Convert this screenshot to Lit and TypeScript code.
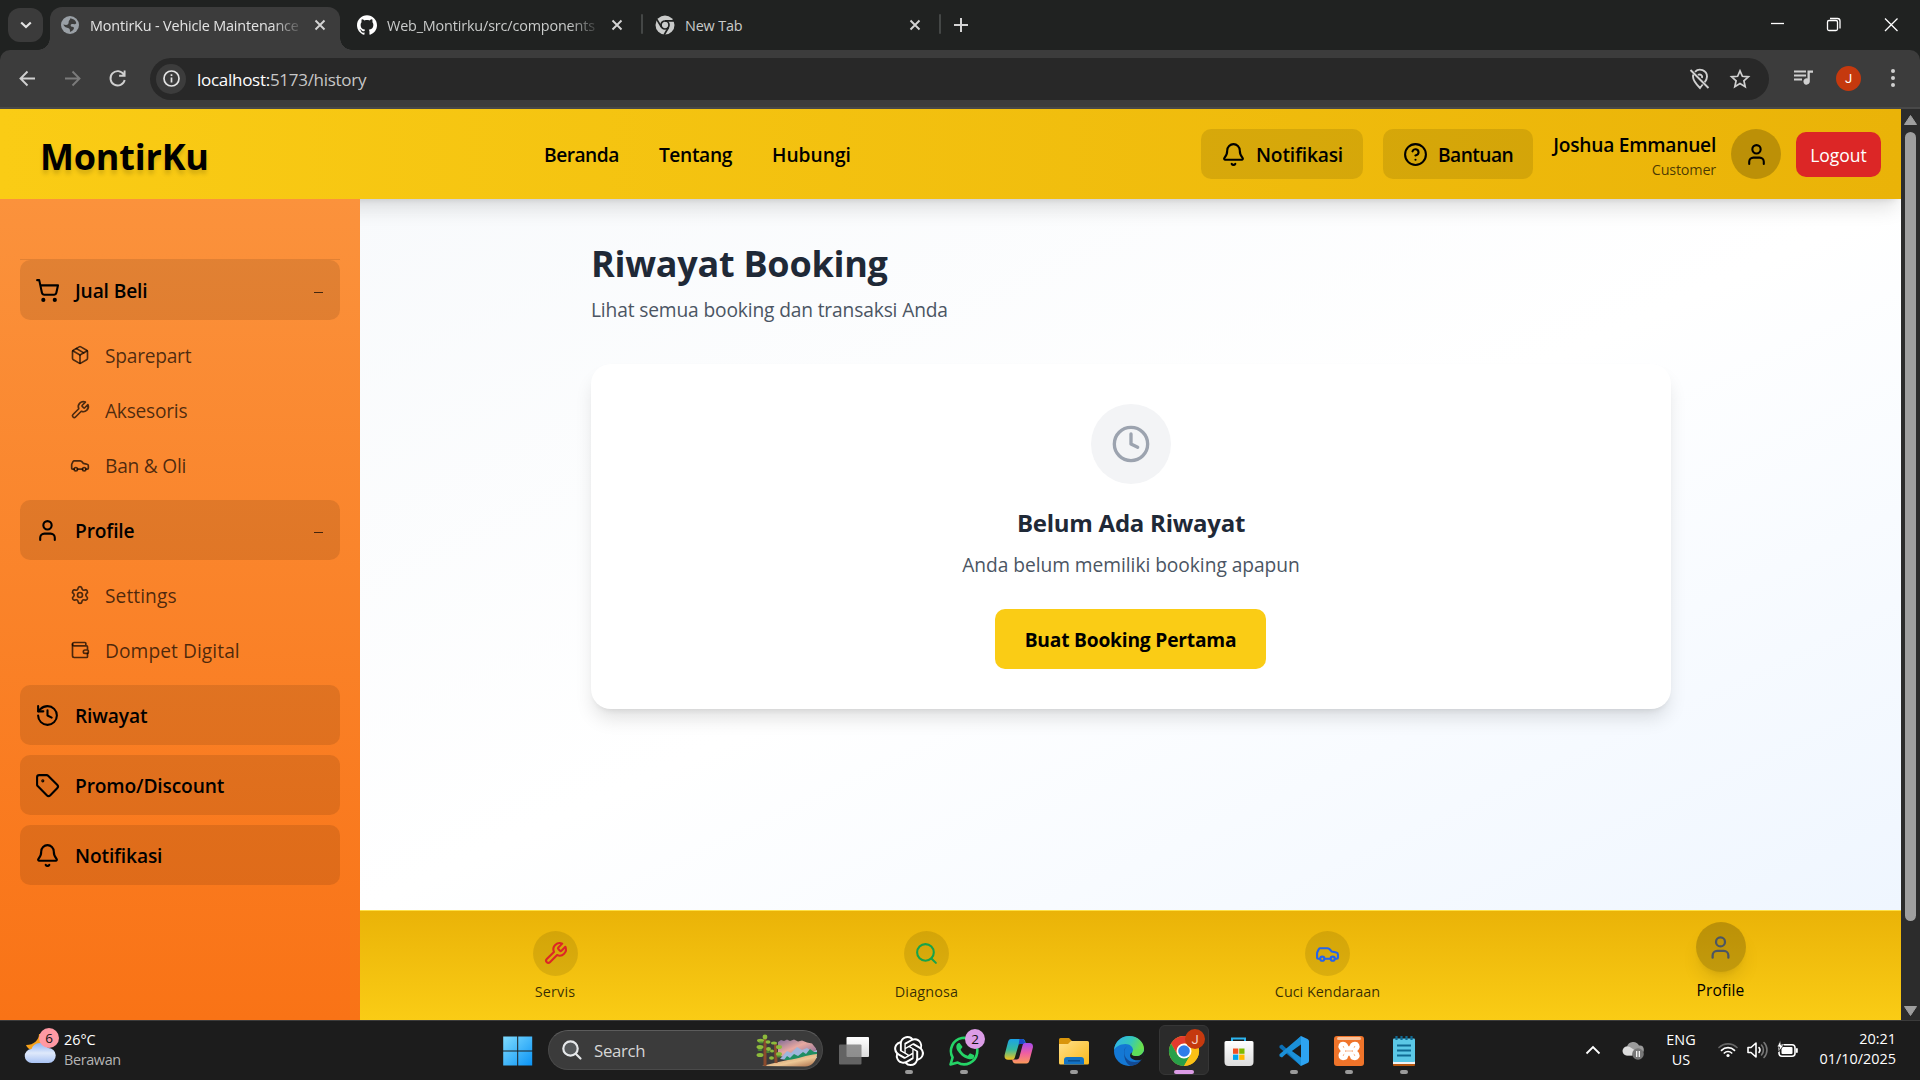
import { LitElement, html, css, svg } from "lit";
import { customElement } from "lit/decorators.js";

const stroke = (body: unknown) => html`<svg class="ico" viewBox="0 0 24 24" fill="none" stroke="currentColor" stroke-width="2" stroke-linecap="round" stroke-linejoin="round">${body}</svg>`;

const I: Record<string, unknown> = {
  bell: svg`<path d="M10.268 21a2 2 0 0 0 3.464 0"/><path d="M3.262 15.326A1 1 0 0 0 4 17h16a1 1 0 0 0 .74-1.673C19.41 13.956 18 12.499 18 8A6 6 0 0 0 6 8c0 4.499-1.411 5.956-2.738 7.326"/>`,
  help: svg`<circle cx="12" cy="12" r="10"/><path d="M9.09 9a3 3 0 0 1 5.83 1c0 2-3 3-3 3"/><path d="M12 17h.01"/>`,
  user: svg`<path d="M19 21v-2a4 4 0 0 0-4-4H9a4 4 0 0 0-4 4v2"/><circle cx="12" cy="7" r="4"/>`,
  cart: svg`<circle cx="8" cy="21" r="1"/><circle cx="19" cy="21" r="1"/><path d="M2.05 2.05h2l2.66 12.42a2 2 0 0 0 2 1.58h9.78a2 2 0 0 0 1.95-1.57l1.65-7.43H5.12"/>`,
  box: svg`<path d="M11 21.73a2 2 0 0 0 2 0l7-4A2 2 0 0 0 21 16V8a2 2 0 0 0-1-1.73l-7-4a2 2 0 0 0-2 0l-7 4A2 2 0 0 0 3 8v8a2 2 0 0 0 1 1.73z"/><path d="M12 22V12"/><path d="M3.29 7 12 12l8.71-5"/><path d="m7.5 4.27 9 5.15"/>`,
  wrench: svg`<path d="M14.7 6.3a1 1 0 0 0 0 1.4l1.6 1.6a1 1 0 0 0 1.4 0l3.77-3.77a6 6 0 0 1-7.94 7.94l-6.91 6.91a2.12 2.12 0 0 1-3-3l6.91-6.91a6 6 0 0 1 7.94-7.94l-3.76 3.76z"/>`,
  car: svg`<path d="M19 17h2c.6 0 1-.4 1-1v-3c0-.9-.7-1.7-1.5-1.9C18.7 10.6 16 10 16 10s-1.3-1.4-2.2-2.3c-.5-.4-1.1-.7-1.8-.7H5c-.6 0-1.1.4-1.4.9l-1.4 2.9A3.7 3.7 0 0 0 2 12v4c0 .6.4 1 1 1h2"/><circle cx="7" cy="17" r="2"/><path d="M9 17h6"/><circle cx="17" cy="17" r="2"/>`,
  gear: svg`<path d="M9.671 4.136a2.34 2.34 0 0 1 4.659 0 2.34 2.34 0 0 0 3.319 1.915 2.34 2.34 0 0 1 2.33 4.033 2.34 2.34 0 0 0 0 3.831 2.34 2.34 0 0 1-2.33 4.033 2.34 2.34 0 0 0-3.319 1.915 2.34 2.34 0 0 1-4.659 0 2.34 2.34 0 0 0-3.32-1.915 2.34 2.34 0 0 1-2.33-4.033 2.34 2.34 0 0 0 0-3.831A2.34 2.34 0 0 1 6.35 6.051a2.34 2.34 0 0 0 3.319-1.915"/><circle cx="12" cy="12" r="3"/>`,
  wallet: svg`<path d="M19 7V4a1 1 0 0 0-1-1H5a2 2 0 0 0 0 4h15a1 1 0 0 1 1 1v4h-3a2 2 0 0 0 0 4h3a1 1 0 0 0 1-1v-2a1 1 0 0 0-1-1"/><path d="M3 5v14a2 2 0 0 0 2 2h15a1 1 0 0 0 1-1v-4"/>`,
  history: svg`<path d="M3 12a9 9 0 1 0 9-9 9.75 9.75 0 0 0-6.74 2.74L3 8"/><path d="M3 3v5h5"/><path d="M12 7v5l4 2"/>`,
  tag: svg`<path d="M12.586 2.586A2 2 0 0 0 11.172 2H4a2 2 0 0 0-2 2v7.172a2 2 0 0 0 .586 1.414l8.704 8.704a2.426 2.426 0 0 0 3.42 0l6.58-6.58a2.426 2.426 0 0 0 0-3.42z"/><circle cx="7.5" cy="7.5" r=".5" fill="currentColor"/>`,
  search: svg`<circle cx="11" cy="11" r="8"/><path d="m21 21-4.3-4.3"/>`,
  clock: svg`<circle cx="12" cy="12" r="10"/><path d="M12 6v6l4 2"/>`,
};

const FONT = css`"Segoe UI", "Open Sans", "Noto Sans", sans-serif`;

const shared = css`
  *, *::before, *::after { box-sizing: border-box; }
  svg { display: block; flex: none; overflow: visible; }
`;

@customElement("browser-chrome")
class BrowserChrome extends LitElement {
  static styles = [shared, css`
    :host { display: flex; flex-direction: column; height: 109px; background: #202221; color: #e3e3e3; font: 14.4px/20px ${FONT}; }
    .strip { display: flex; height: 50px; align-items: flex-start; }
    .tabsearch { width: 35px; height: 34px; margin: 8px 7px 0 8px; border-radius: 12px; background: #3b3b3b; display: grid; place-items: center; }
    .tab { display: flex; align-items: center; height: 36px; margin-top: 7px; padding: 0 12px 0 10px; }
    .tab svg.fav { width: 20px; height: 20px; }
    .title { margin-left: 10px; width: 210px; white-space: nowrap; overflow: hidden; letter-spacing: -0.16px; color: #c9cbca; padding-top: 1px; }
    .fade { -webkit-mask-image: linear-gradient(90deg, #000 182px, transparent 214px); mask-image: linear-gradient(90deg, #000 182px, transparent 214px); }
    .x { width: 10px; height: 10px; margin-left: 15px; }
    .active { position: relative; width: 290px; height: 43px; padding-bottom: 7px; background: #3c3c3c; border-radius: 12px 12px 0 0; }
    .active::before, .active::after { content: ""; position: absolute; bottom: 0; width: 12px; height: 12px; }
    .active::before { left: -12px; background: radial-gradient(circle at 0 0, transparent 11.5px, #3c3c3c 12px); }
    .active::after { right: -12px; background: radial-gradient(circle at 100% 0, transparent 11.5px, #3c3c3c 12px); }
    .active .title { color: #e4e4e4; }
    .second { width: 301px; padding-left: 17px; }
    .third { width: 296px; padding-left: 12px; }
    .sep { width: 2px; height: 20px; margin-top: 14px; background: #444746; border-radius: 1px; }
    .plus { width: 14px; height: 14px; margin: 18px 0 0 13px; }
    .win { display: flex; margin-left: auto; }
    .win svg { width: 57px; height: 50px; }
    .bar { display: flex; align-items: center; height: 59px; background: #3c3c3c; border-radius: 10px 10px 0 0; border-bottom: 2px solid #494949; }
    .bar > svg { width: 45px; height: 45px; }
    .bar > .first { margin-left: 5px; }
    .omni { display: flex; align-items: center; width: 1619px; height: 42px; margin-left: 10px; border-radius: 21px; background: #282828; padding: 0 18px 0 6px; }
    .info { width: 30px; height: 30px; border-radius: 50%; background: #3c3c3c; display: grid; place-items: center; }
    .url { margin-left: 11px; font-size: 17px; letter-spacing: -0.28px; color: #c7c7c7; margin-right: auto; padding-top: 2px; }
    .url b { font-weight: 400; color: #fff; }
    .omni > svg { width: 22px; height: 22px; margin-left: 18px; }
    .me { width: 25px; height: 25px; margin: 0 20px 0 11px; border-radius: 50%; background: #c5390e; color: #fff; display: grid; place-items: center; font: 13px/1 Roboto, sans-serif; }
    .media { margin-left: 11px; }
    .bar > .dots { width: 24px; }
  `];
  render() {
    const x = html`<svg class="x" viewBox="0 0 10 10" stroke="#d4d4d4" stroke-width="1.9" fill="none"><path d="M.5.5l9 9M9.500.5l-9 9"/></svg>`;
    return html`
      <div class="strip">
        <div class="tabsearch"><svg width="12" height="8" viewBox="0 0 12 8" fill="none" stroke="#e3e3e3" stroke-width="2.2"><path d="M1.200 1.500 6 6l4.800-4.500"/></svg></div>
        <div class="tab active">
          <svg class="fav" viewBox="0 0 20 20"><circle cx="10" cy="10" r="9" fill="#9aa0a6"/><path d="M10 3.500c2.600.1 5.800 1.300 6.300 4.800-1.500 2-3.400.4-4.900.9-1.500.6-.5 2.600.8 2.600 1.800 0 2.200 1.300 1.400 2.500-.9 1.300-2.400 2.300-3.600 2.600 0-2-.1-3-1.400-3.600-1.600-.8-4.600-1.300-5.300-3.900 1.400.4 3.600 1 4.700-.2 1.200-1.300.2-2.700 1.200-3.700.6-.7 1-1 .8-2z" fill="#3c3c3c"/></svg>
          <div class="title fade">MontirKu - Vehicle Maintenance</div>${x}
        </div>
        <div class="tab second">
          <svg class="fav" viewBox="0 0 24 24" fill="#fff"><path d="M12 .297c-6.630 0-12 5.373-12 12 0 5.303 3.438 9.800 8.205 11.385.6.113.82-.258.82-.577 0-.285-.010-1.040-.015-2.040-3.338.724-4.042-1.610-4.042-1.610C4.422 18.070 3.633 17.700 3.633 17.700c-1.087-.744.084-.729.084-.729 1.205.084 1.838 1.236 1.838 1.236 1.070 1.835 2.809 1.305 3.495.998.108-.776.417-1.305.76-1.605-2.665-.3-5.466-1.332-5.466-5.930 0-1.310.465-2.380 1.235-3.220-.135-.303-.54-1.523.105-3.176 0 0 1.005-.322 3.300 1.230.96-.267 1.980-.399 3-.405 1.020.006 2.040.138 3 .405 2.280-1.552 3.285-1.230 3.285-1.230.645 1.653.24 2.873.12 3.176.765.84 1.230 1.910 1.230 3.220 0 4.610-2.805 5.625-5.475 5.920.42.36.81 1.096.81 2.220 0 1.606-.015 2.896-.015 3.286 0 .315.21.69.825.57C20.565 22.092 24 17.592 24 12.297c0-6.627-5.373-12-12-12"/></svg>
          <div class="title fade">Web_Montirku/src/components</div>${x}
        </div>
        <div class="sep"></div>
        <div class="tab third">
          <svg class="fav" viewBox="0 0 20 20"><circle cx="10" cy="10" r="9.500" fill="#c9cbca"/><circle cx="10" cy="10" r="4" fill="none" stroke="#202221" stroke-width="1.700"/><path d="M10 5.800h9M6.400 12 1.800 4.400M13.600 12.200 9.200 19.800" stroke="#202221" stroke-width="1.700"/></svg>
          <div class="title">New Tab</div>${x}
        </div>
        <div class="sep"></div>
        <svg class="plus" viewBox="0 0 14 14" stroke="#d4d4d4" stroke-width="2"><path d="M7 0v14M0 7h14"/></svg>
        <div class="win">
          <svg viewBox="0 0 57 50" stroke="#fff" stroke-width="1.300"><path d="M22 23.500h13"/></svg>
          <svg viewBox="0 0 57 50" stroke="#fff" stroke-width="1.300" fill="none"><rect x="21.500" y="20.500" width="10" height="10" rx="1.500"/><path d="M24 18.500h7.500a2.500 2.500 0 0 1 2.500 2.500v7.500"/></svg>
          <svg viewBox="0 0 57 50" stroke="#fff" stroke-width="1.300"><path d="m22 18.500 12.500 12.500M34.500 18.500 22 31"/></svg>
        </div>
      </div>
      <div class="bar">
        <svg class="first" viewBox="0 0 45 45" stroke="#d0d0d0" stroke-width="1.900" fill="none"><path d="M30 22.500H16M22.500 15.500l-7 7 7 7"/></svg>
        <svg viewBox="0 0 45 45" stroke="#7b7b7b" stroke-width="1.900" fill="none"><path d="M15 22.500h14M22.500 15.500l7 7-7 7"/></svg>
        <svg viewBox="0 0 45 45" stroke="#d0d0d0" stroke-width="1.900" fill="none"><path d="M28.800 18.500a7.200 7.200 0 1 0 .9 5.500M29.600 14.500v5.200h-5.500"/></svg>
        <div class="omni">
          <div class="info"><svg width="17" height="17" viewBox="0 0 17 17" fill="none" stroke="#e3e3e3" stroke-width="1.700"><circle cx="8.500" cy="8.500" r="7.500"/><path d="M8.500 7.500v5M8.500 4.300v1.800"/></svg></div>
          <div class="url"><b>localhost:</b>5173/history</div>
          <svg viewBox="0 0 22 22" fill="none" stroke="#d0d0d0" stroke-width="1.900"><path d="M6 3.800A7 7 0 0 1 18 8.500c0 2-1 4-2.300 5.800M13.700 16.500C12.500 18 11 20 11 20S4 13 4 8.500c0-.7.100-1.300.3-1.900M1.500 2l18 18M9 7a2.600 2.600 0 0 1 4 3"/></svg>
          <svg viewBox="0 0 22 22" fill="none" stroke="#d0d0d0" stroke-width="1.700"><path d="m11 2.800 2.400 5.500 6 .5-4.500 4 1.300 5.900-5.200-3.100-5.200 3.100 1.300-5.900-4.500-4 6-.5z"/></svg>
        </div>
        <svg class="media" viewBox="0 0 45 45" fill="#d0d0d0"><path d="M14 14.500h12v2H14zM14 18.500h12v2H14zM14 22.500h8v2h-8zM27.500 14.500H33v2.300h-3.200v8.700a3.200 3.200 0 1 1-2.300-3.100z"/></svg>
        <div class="me">J</div>
        <svg class="dots" viewBox="0 0 24 45" fill="#d0d0d0"><circle cx="12" cy="15" r="2"/><circle cx="12" cy="22" r="2"/><circle cx="12" cy="29" r="2"/></svg>
      </div>`;
  }
}

@customElement("site-header")
class SiteHeader extends LitElement {
  static styles = [shared, css`
    :host { display: flex; align-items: center; height: 90px; padding: 0 20px 0 41px; color: #000; font: 19.2px/30px ${FONT};
      background: linear-gradient(90deg, #facc15, #eab308); position: relative; z-index: 2;
      box-shadow: 0 12.5px 18.75px -3.75px rgba(0,0,0,.12), 0 5px 7.5px -5px rgba(0,0,0,.12); }
    .logo { width: 504px; font-size: 36px; font-weight: 700; letter-spacing: -.2px; text-shadow: 0 4px 4px rgba(0,0,0,.15); padding-top: 5px; margin-left: -1px; }
    nav { display: flex; gap: 40px; font-weight: 600; margin-right: auto; padding-top: 2px; }
    .n0 { letter-spacing: -.5px; } .n1 { letter-spacing: -.36px; } .n2 { letter-spacing: 0; }
    .pill { display: flex; align-items: center; height: 50px; padding: 0 0 0 20px; border-radius: 10px; background: rgba(0,0,0,.1); font-weight: 600; margin-right: 20px; }
    .notif { width: 162px; letter-spacing: -.18px; }
    .bantuan { width: 150px; letter-spacing: -.56px; }
    .ico { width: 25px; height: 25px; margin-right: 10px; }
    .pill span { padding-top: 2px; }
    .who { text-align: right; padding-top: 2px; width: 163px; }
    .name { font-weight: 600; line-height: 30px; letter-spacing: -.25px; }
    .role { font-size: 14.4px; line-height: 20px; color: rgba(0,0,0,.7); letter-spacing: -.2px; }
    .avatar { width: 50px; height: 50px; margin: 0 15px; border-radius: 50%; background: rgba(0,0,0,.2); display: grid; place-items: center; }
    .avatar .ico { margin: 0; }
    .logout { height: 45px; width: 85px; border-radius: 10px; background: #dc2626; color: #fff; display: grid; place-items: center; font-size: 17.500px; padding-top: 2px; }
  `];
  render() {
    return html`
      <div class="logo">MontirKu</div>
      <nav>${["Beranda", "Tentang", "Hubungi"].map((l, i) => html`<span class="n${i}">${l}</span>`)}</nav>
      <div class="pill notif">${stroke(I.bell)}<span>Notifikasi</span></div>
      <div class="pill bantuan">${stroke(I.help)}<span>Bantuan</span></div>
      <div class="who"><div class="name">Joshua Emmanuel</div><div class="role">Customer</div></div>
      <div class="avatar">${stroke(I.user)}</div>
      <div class="logout">Logout</div>`;
  }
}

const MENU = [
  { label: "Jual Beli", icon: "cart", cls: "", items: [["Sparepart", "box"], ["Aksesoris", "wrench"], ["Ban & Oli", "car"]] },
  { label: "Profile", icon: "user", cls: "wide", items: [["Settings", "gear"], ["Dompet Digital", "wallet"]] },
  { label: "Riwayat", icon: "history", cls: "", items: [] },
  { label: "Promo/Discount", icon: "tag", cls: "", items: [] },
  { label: "Notifikasi", icon: "bell", cls: "", items: [] },
];

@customElement("side-menu")
class SideMenu extends LitElement {
  static styles = [shared, css`
    :host { display: flex; flex-direction: column; width: 360px; padding: 60px 20px 0; position: relative; z-index: 3;
      background: linear-gradient(180deg, #fb923c, #f97316); color: #000; font: 19.2px/30px ${FONT}; }
    .list { display: flex; flex-direction: column; gap: 10px; border-top: 1px solid rgba(0,0,0,.1); }
    .head { display: flex; align-items: center; height: 60px; padding: 0 17px 0 15px; border-radius: 10px; background: rgba(0,0,0,.1); font-weight: 600; letter-spacing: -.15px; }
    .head .ico { width: 25px; height: 25px; margin-right: 15px; }
    .head span { padding-top: 2px; }
    .dash { margin-left: auto; width: 9px; height: 1.500px; background: rgba(0,0,0,.7); margin-top: 5px; }
    .sub { display: flex; flex-direction: column; gap: 5px; margin-top: 10px; padding-left: 50px; color: rgba(0,0,0,.7); letter-spacing: -.26px; }
    .wide { letter-spacing: .06px; }
    .row { display: flex; align-items: center; height: 50px; }
    .row .ico { width: 20px; height: 20px; margin-right: 15px; }
    .row span { padding-top: 2px; }
  `];
  render() {
    return html`<div class="list">${MENU.map(g => html`<div>
      <div class="head">${stroke(I[g.icon])}<span>${g.label}</span>${g.items.length ? html`<i class="dash"></i>` : ""}</div>
      ${g.items.length ? html`<div class="sub ${g.cls}">${g.items.map(([l, i]) => html`<div class="row">${stroke(I[i])}<span>${l}</span></div>`)}</div>` : ""}
    </div>`)}</div>`;
  }
}

@customElement("history-page")
class HistoryPage extends LitElement {
  static styles = [shared, css`
    :host { display: block; flex: 1; padding: 40px 230px 0 231px; background: linear-gradient(to bottom right, #f8fafc 0%, #fff 50%, #eff6ff 100%); color: #1f2937; font: 19.2px/30px ${FONT}; }
    h1 { margin: 0; font-size: 36px; line-height: 50px; font-weight: 700; letter-spacing: -.26px; }
    p { margin: 0; color: #4b5563; letter-spacing: -.15px; }
    .lead { margin-top: 6px; }
    .card { margin-top: 39px; height: 345px; border-radius: 20px; background: #fff; display: flex; flex-direction: column; align-items: center; padding-top: 40px;
      box-shadow: 0 12.5px 18.75px -3.75px rgba(0,0,0,.12), 0 5px 7.5px -5px rgba(0,0,0,.12); }
    .disc { width: 80px; height: 80px; border-radius: 50%; background: #f3f4f6; color: #9ca3af; display: grid; place-items: center; }
    .disc .ico { width: 40px; height: 40px; }
    h2 { margin: 21px 0 0; font-size: 24px; line-height: 35px; font-weight: 700; letter-spacing: -.25px; }
    .card p { margin-top: 10px; letter-spacing: -.05px; }
    .cta { margin: 29px 1px 0 0; width: 271px; height: 60px; border-radius: 10px; background: #facc15; color: #000; font-weight: 700; letter-spacing: -.2px; display: grid; place-items: center; padding-top: 2px; }
  `];
  render() {
    return html`
      <h1>Riwayat Booking</h1>
      <p class="lead">Lihat semua booking dan transaksi Anda</p>
      <div class="card">
        <div class="disc">${stroke(I.clock)}</div>
        <h2>Belum Ada Riwayat</h2>
        <p>Anda belum memiliki booking apapun</p>
        <div class="cta">Buat Booking Pertama</div>
      </div>`;
  }
}

@customElement("bottom-nav")
class BottomNav extends LitElement {
  static styles = [shared, css`
    :host { display: flex; height: 110px; border-top: 1px solid #fde047; background: linear-gradient(180deg, #eab308, #facc15); font: 14.4px/20px ${FONT}; position: relative; z-index: 1; }
    .it { display: flex; flex-direction: column; align-items: center; padding-top: 20px; color: rgba(0,0,0,.78); letter-spacing: .15px; }
    .a { width: 390px; } .b { width: 353px; } .c { width: 449px; letter-spacing: 0; } .d { width: 337px; }
    .disc { width: 45px; height: 45px; border-radius: 50%; background: rgba(0,0,0,.1); display: grid; place-items: center; margin-bottom: 6px; }
    .ico { width: 25px; height: 25px; }
    .a .ico { color: #dc2626; } .b .ico { color: #16a34a; } .c .ico { color: #2563eb; } .d .ico { color: #4b5563; width: 27px; height: 27px; }
    .d { padding-top: 11px; color: #000; }
    .d .disc { width: 50px; height: 50px; background: rgba(0,0,0,.2); box-shadow: 0 12.5px 18.75px -3.75px rgba(0,0,0,.1), 0 5px 7.5px -5px rgba(0,0,0,.1); margin-bottom: 8px; }
    .d span { font-weight: 500; font-size: 15.600px; }
  `];
  render() {
    const items = [["a", "wrench", "Servis"], ["b", "search", "Diagnosa"], ["c", "car", "Cuci Kendaraan"], ["d", "user", "Profile"]];
    return html`${items.map(([k, i, l]) => html`<div class="it ${k}"><div class="disc">${stroke(I[i])}</div><span>${l}</span></div>`)}`;
  }
}

@customElement("task-bar")
class TaskBar extends LitElement {
  static styles = [shared, css`
    :host { display: flex; height: 60px; background: #1c1c1c; border-top: 1px solid #3b3b3b; color: #fff; font: 14.4px/20px ${FONT}; }
    .weather { display: flex; width: 490px; padding: 9px 0 0 24px; }
    .wtxt { margin-left: 8px; }
    .dim { color: #b4b4b4; letter-spacing: -.35px; }
    .wicon { position: relative; width: 32px; height: 40px; }
    .badge { position: absolute; width: 20px; height: 20px; border-radius: 50%; display: grid; place-items: center; font-size: 13.500px; line-height: 20px; color: #111; }
    .pink { background: #ff99a4; left: 15px; top: -2px; }
    .slot { position: relative; width: 55px; height: 59px; display: grid; place-items: center; }
    .slot > svg { width: 30px; height: 30px; }
    .on::after { content: ""; position: absolute; left: 23.500px; top: 49px; width: 8px; height: 4px; border-radius: 2px; background: #9a9a9a; }
    .cur::before { content: ""; position: absolute; left: 2.500px; top: 4px; width: 50px; height: 50px; border-radius: 6px; background: #2b2b2b; border: 1px solid #363636; }
    .cur > svg { position: relative; }
    .cur::after { left: 17.500px; width: 20px; background: #dc9ce6; }
    .lilac { background: #dc9ce6; left: 29px; top: 8px; }
    .red { background: #c5390e; color: #f3cfc4; left: 29px; top: 8px; font: 13px/1 Roboto, sans-serif; }
    .search { display: flex; align-items: center; width: 275px; height: 40px; margin: 9px 3px 0; border-radius: 20px; background: #3b3b3b; border: 1px solid #4a4a4a; border-top-color: #5c5c5c; padding: 0 4px 0 13px; overflow: hidden; }
    .search span { margin-left: 12px; font-size: 16.800px; letter-spacing: -.3px; color: #d6d6d6; margin-right: auto; padding-top: 2px; }
    .tray { display: flex; margin-left: auto; padding-right: 24px; }
    .tray svg { margin-top: 19px; }
    .tray .cloud { margin-left: 21px; }
    .lang { width: 56px; margin: 9px 9px 0 9px; text-align: center; }
    .tray .vol { margin-left: 9px; }
    .tray .bat { margin-left: 9px; }
    .time { text-align: right; width: 90px; margin: 8px 0 0 8px; }
  `];
  render() {
    return html`
      <div class="weather">
        <div class="wicon"><svg width="32" height="40" viewBox="0 0 32 40">
          <defs><linearGradient id="cl" x1="0" y1="0" x2="0" y2="1"><stop offset="0" stop-color="#8fb4f5"/><stop offset=".5" stop-color="#dfe9fb"/><stop offset="1" stop-color="#a9c3f4"/></linearGradient></defs>
          <path d="M15 4c0 6-5 11-13 11 2 5 8 7 15 4V4z" fill="#f6a21b"/>
          <path d="M8 33a7 7 0 0 1-.5-14A9 9 0 0 1 24 18a7.500 7.500 0 0 1 .5 15z" fill="url(#cl)"/></svg>
          <div class="badge pink">6</div></div>
        <div class="wtxt"><div>26°C</div><div class="dim">Berawan</div></div>
      </div>
      <div class="slot"><svg viewBox="0 0 30 30"><defs><linearGradient id="wn" x1="0" y1="0" x2="1" y2="1"><stop offset="0" stop-color="#7fdcff"/><stop offset="1" stop-color="#0a93f5"/></linearGradient></defs><path d="M.2.5h14v14h-14zM15.200.5h14v14h-14zM.2 15.500h14v14h-14zM15.200 15.500h14v14h-14z" fill="url(#wn)"/></svg></div>
      <div class="search">
        <svg width="20" height="20" viewBox="0 0 20 20" fill="none" stroke="#e6e8ea" stroke-width="2.200" stroke-linecap="round"><circle cx="8.500" cy="8.500" r="7.200" fill="#55585a"/><path d="m14 14 4.500 4.500"/></svg>
        <span>Search</span>
        <svg width="62" height="33" viewBox="0 0 62 33">
          <defs><linearGradient id="mt" x1="0" y1="0" x2="1" y2="1"><stop offset="0" stop-color="#7d6a98"/><stop offset=".45" stop-color="#e8a9a0"/><stop offset="1" stop-color="#7d659c"/></linearGradient>
          <linearGradient id="sd" x1="0" y1="0" x2="1" y2="1"><stop offset="0" stop-color="#b87a52"/><stop offset=".6" stop-color="#edc795"/><stop offset="1" stop-color="#a86b48"/></linearGradient></defs>
          <path d="M22 8l3-2 3 1 3-1.500 3 1.500 4-1.500 4 2 4-1 5 2 5 1 4 5 1 8H22z" fill="url(#mt)"/>
          <path d="M24 25l7-8 4 2 6-6 5 3 5-2 6 4 4-2v8l-16 4z" fill="#9fb6dc"/>
          <path d="M28 26l3-4 3 2 4-4 4 2 5-4 3 2 4-5 4 3 3 0v5l-16 4z" fill="#1f8e63"/>
          <path d="M6 32c8-2 16-4 26-6 10-1 18-5 29-6 0 6-5 12.500-12 12.500z" fill="url(#sd)"/>
          <path d="M9 3v29M19.500 10l.5 19" fill="none" stroke="#8a4b2d" stroke-width="3"/>
          <g fill="#8dbb3c"><circle cx="9" cy="3" r="2.400"/><ellipse cx="4.500" cy="6.500" rx="3.500" ry="1.800"/><ellipse cx="12" cy="8" rx="2.500" ry="1.800"/><ellipse cx="4" cy="13" rx="3.500" ry="2"/><ellipse cx="12.500" cy="15" rx="2.500" ry="2"/><ellipse cx="4" cy="21" rx="3.500" ry="2"/><ellipse cx="18" cy="9" rx="3" ry="1.600"/><ellipse cx="23" cy="13" rx="3" ry="2"/><ellipse cx="16" cy="17" rx="2" ry="1.500"/><ellipse cx="23" cy="20" rx="3" ry="2"/><ellipse cx="15.500" cy="24" rx="2.500" ry="1.800"/></g>
          <g fill="#4f8a35"><ellipse cx="5" cy="8.500" rx="2.500" ry="1"/><ellipse cx="4" cy="16" rx="2.500" ry="1"/><ellipse cx="12" cy="18" rx="2" ry="1"/><ellipse cx="23" cy="22.500" rx="2.500" ry="1"/></g>
        </svg>
      </div>
      <div class="slot"><svg viewBox="0 0 30 30"><defs><linearGradient id="tv" x1="0" y1="0" x2="0" y2="1"><stop offset="0" stop-color="#fff"/><stop offset="1" stop-color="#dcdcdc"/></linearGradient></defs><rect x="7.500" y="1" width="22.500" height="20" rx="1" fill="url(#tv)"/><rect x="0" y="8.500" width="22.500" height="20" rx="1" fill="#777" fill-opacity=".78"/></svg></div>
      <div class="slot on"><svg viewBox="0 0 24 24" fill="#fff"><path d="M22.2819 9.8211a5.9847 5.9847 0 0 0-.5157-4.9108 6.0462 6.0462 0 0 0-6.5098-2.9A6.0651 6.0651 0 0 0 4.9807 4.1818a5.9847 5.9847 0 0 0-3.9977 2.9 6.0462 6.0462 0 0 0 .7427 7.0966 5.98 5.98 0 0 0 .511 4.9107 6.051 6.051 0 0 0 6.5146 2.9001A5.9847 5.9847 0 0 0 13.2599 24a6.0557 6.0557 0 0 0 5.7718-4.2058 5.9894 5.9894 0 0 0 3.9977-2.9001 6.0557 6.0557 0 0 0-.7475-7.0729zm-9.022 12.6081a4.4755 4.4755 0 0 1-2.8764-1.0408l.1419-.0804 4.7783-2.7582a.7948.7948 0 0 0 .3927-.6813v-6.7369l2.02 1.1686a.071.071 0 0 1 .038.052v5.5826a4.504 4.504 0 0 1-4.4945 4.4944zm-9.6607-4.1254a4.4708 4.4708 0 0 1-.5346-3.0137l.142.0852 4.783 2.7582a.7712.7712 0 0 0 .7806 0l5.8428-3.3685v2.3324a.0804.0804 0 0 1-.0332.0615L9.74 19.9502a4.4992 4.4992 0 0 1-6.1408-1.6464zM2.3408 7.8956a4.485 4.485 0 0 1 2.3655-1.9728V11.6a.7664.7664 0 0 0 .3879.6765l5.8144 3.3543-2.0201 1.1685a.0757.0757 0 0 1-.071 0l-4.8303-2.7865A4.504 4.504 0 0 1 2.3408 7.872zm16.5963 3.8558L13.1038 8.364 15.1192 7.2a.0757.0757 0 0 1 .071 0l4.8303 2.7913a4.4944 4.4944 0 0 1-.6765 8.1042v-5.6772a.79.79 0 0 0-.407-.667zm2.0107-3.0231l-.142-.0852-4.7735-2.7818a.7759.7759 0 0 0-.7854 0L9.409 9.2297V6.8974a.0662.0662 0 0 1 .0284-.0615l4.8303-2.7866a4.4992 4.4992 0 0 1 6.6802 4.66zM8.3065 12.863l-2.02-1.1638a.0804.0804 0 0 1-.038-.0567V6.0742a4.4992 4.4992 0 0 1 7.3757-3.4537l-.142.0805L8.704 5.459a.7948.7948 0 0 0-.3927.6813zm1.0976-2.3654l2.602-1.4998 2.6069 1.4998v2.9994l-2.5974 1.4997-2.6067-1.4997Z"/></svg></div>
      <div class="slot on"><svg viewBox="0 0 30 30"><path d="M1.500 28.500 3.600 21.500A13.200 13.200 0 1 1 8.700 26.600z" fill="none" stroke="#25d366" stroke-width="2.600" stroke-linejoin="round"/><path d="M11.200 7.800c-.4-.8-.7-.8-1.200-.8-1.200 0-2.700 1.500-2.700 3.700 0 2.300 1.600 4.500 1.900 4.800.2.300 3.200 5 7.900 6.800 3.900 1.500 4.700.8 5.500.7.900-.1 2.300-1 2.500-2.100.2-1 .2-1.600-.2-1.800l-3.300-1.600c-.4-.2-.8-.2-1.100.3l-1.400 1.700c-.3.300-.6.300-1 .1-3.300-1.500-5-3.200-6.300-5.700-.2-.4 0-.7.2-.9l1.200-1.500c.2-.3.200-.6.100-.9z" fill="#25d366"/></svg><div class="badge lilac">2</div></div>
      <div class="slot"><svg viewBox="0 0 30 30"><defs><linearGradient id="c1" x1="0" y1="0" x2="0" y2="1"><stop offset="0" stop-color="#1ba3e8"/><stop offset=".5" stop-color="#35b9a0"/><stop offset="1" stop-color="#f5c21b"/></linearGradient><linearGradient id="c2" x1="0" y1="0" x2="0" y2="1"><stop offset="0" stop-color="#a64bf0"/><stop offset=".5" stop-color="#f05fa0"/><stop offset="1" stop-color="#fb9a5a"/></linearGradient></defs>
        <path d="M7 3h11c2.500 0 3 1.500 3.700 4h-4.500c-1.700 0-2.400 1-2.800 2.500L11 21c-.5 2-1.500 2.800-3.500 2.800H4c-3 0-4-2.500-3.200-5.500L4 6c.6-2 1.500-3 3-3z" fill="url(#c1)"/><path d="M17 2.900c3 0 3.600 1.800 4.700 5h-5c-1 0-1.700.4-2.200 1.400l1-6.400z" fill="#1b49c9"/>
        <path d="M22.500 27.500H11.800c-2.500 0-3-1.500-3.700-4h4.500c1.700 0 2.400-1 2.800-2.500L18.500 9.500c.5-2 1.500-2.500 3.500-2.500h3.500c3 0 4 2.300 3.200 5.300l-3.200 12.200c-.6 2-1.500 3-3 3z" fill="url(#c2)"/></svg></div>
      <div class="slot on"><svg viewBox="0 0 30 30"><defs><linearGradient id="fo" x1="0" y1="0" x2="1" y2="1"><stop offset="0" stop-color="#ffe08a"/><stop offset="1" stop-color="#fbb91a"/></linearGradient></defs><path d="M0 3.500a1.500 1.500 0 0 1 1.500-1.500H10l3 3h14v5H0z" fill="#d9950b"/><path d="M0 8h9l3-3h16.500A1.500 1.500 0 0 1 30 6.500V27a1.500 1.500 0 0 1-1.500 1.500h-27A1.500 1.500 0 0 1 0 27z" fill="url(#fo)"/><path d="M5 28.500V24a3 3 0 0 1 3-3h14a3 3 0 0 1 3 3v4.500z" fill="#1273c4"/><path d="M9 24.800h12" stroke="#0b4d8c" stroke-width="1.500"/></svg></div>
      <div class="slot"><svg viewBox="0 0 30 30"><defs><linearGradient id="e1" x1="0" y1="0" x2="1" y2=".3"><stop offset="0" stop-color="#2fb1ee"/><stop offset=".6" stop-color="#35c9b8"/><stop offset="1" stop-color="#6be04a"/></linearGradient></defs>
        <circle cx="15" cy="15" r="15" fill="#1478d4"/><path d="M0 14C1 5 8 0 15 0c9 0 15 6.500 15 12.500 0 4.500-3.500 7.500-7.500 7.500-3 0-5-1-5-2 0-.8 1.500-1.500 1.500-4 0-3-3-6-7.500-6C6 8 1.500 11 0 14z" fill="url(#e1)"/><path d="M10 16c0-3 1.500-5 3.500-6-3.500 2-5 9 0 13.500 4 3.500 10 3 14 .5A15 15 0 0 1 17 30C11 28 10 20 10 16z" fill="#124a94"/><path d="M18.500 18.700c1 1.500 4.500 1.800 7 .8 2-.8 3.500-2.500 4.300-4.500.8 4-.5 6.800-2.300 8.500-3 1.500-8 1-10.500-1.500-1.500-2-1-5 1.200-5.500z" fill="#1c1c1c"/><path d="M30 12.500c0 4.500-3.500 7.500-7.500 7.500-3 0-5-1-5-2 0-.8 1.500-1.500 1.500-4z" fill="#5fdc5a"/></svg></div>
      <div class="slot on cur"><svg viewBox="0 0 30 30"><circle cx="15" cy="15" r="15" fill="#fbc116"/><path d="M15 15 8.500 18.750 2 7.500A15 15 0 0 1 28 7.500H15z" fill="#e33b2e"/><path d="M2 7.500A15 15 0 0 0 15 30l6.500-11.250L15 15 8.500 18.750z" fill="#28a049"/><path d="M28 7.500A15 15 0 0 1 15 30l6.500-11.250L21 7.500z" fill="#fbc116"/><circle cx="15" cy="15" r="7.500" fill="#fff"/><circle cx="15" cy="15" r="5.800" fill="#2f7de9"/></svg><div class="badge red">J</div></div>
      <div class="slot"><svg viewBox="0 0 30 30"><defs><linearGradient id="st" x1="0" y1="0" x2="0" y2="1"><stop offset="0" stop-color="#fff"/><stop offset="1" stop-color="#dcdcdc"/></linearGradient></defs><path d="M8 7V2.500h13V7" fill="none" stroke="#2cb5f0" stroke-width="2"/><path d="M.5 6.500A1.500 1.500 0 0 1 2 5h26a1.500 1.500 0 0 1 1.500 1.500V26a4 4 0 0 1-4 4h-21a4 4 0 0 1-4-4z" fill="url(#st)"/><path d="M9 12.500h5.300v5.300H9z" fill="#f25022"/><path d="M15.200 12.500h5.300v5.300h-5.300z" fill="#7fba00"/><path d="M9 18.600h5.300v5.300H9z" fill="#00a4ef"/><path d="M15.200 18.600h5.300v5.300h-5.300z" fill="#ffb900"/></svg></div>
      <div class="slot on"><svg viewBox="0 0 30 30"><path d="M22 0 8.500 13.500 3 8.500.5 9.800v2L22 30z" fill="#0b6fb5"/><path d="M22 30 8.500 16.500 3 21.500.5 20.200v-2L22 0v8.500L13 15l9 6.500z" fill="#1b90d8"/><path d="M22 0l6.500 3a2.500 2.500 0 0 1 1.500 2.300v19.400a2.500 2.500 0 0 1-1.500 2.300L22 30z" fill="#2da3f2"/><path d="M22 8.500 13 15l9 6.500z" fill="#1c1c1c"/></svg></div>
      <div class="slot on"><svg viewBox="0 0 30 30"><rect width="30" height="30" rx="3" fill="#f0742a"/><rect x="3" y="1" width="24" height="3" rx="1.500" fill="#f9c29b"/><path d="M12.500 12.500c0-3-1.500-4.500-3.500-4.500s-3 2-2 3.800c.7 1.200 2 1.700 2 3.200s-1.300 2-2 3.200C6 20 7 22 9 22s3.500-1.500 3.500-4.500h5c0 3 1.500 4.500 3.500 4.500s3-2 2-3.800c-.7-1.200-2-1.700-2-3.200s1.300-2 2-3.200C24 10 23 8 21 8s-3.500 1.500-3.500 4.500z" fill="none" stroke="#fff" stroke-width="4.400" stroke-linejoin="round"/></svg></div>
      <div class="slot on"><svg viewBox="0 0 30 30"><rect x="4" y="25" width="22" height="5" rx="1" fill="#b8570f"/><rect x="4" y="24" width="22" height="4" fill="#f2f2f2"/><rect x="4" y="2.500" width="22" height="23.500" rx="1" fill="#5bc8e6"/><path d="M8 9.500h14M8 14.500h14M8 19.500h14" stroke="#0f6a93" stroke-width="1.800"/><path d="M7.500 0v4M12.500 0v4M17.500 0v4M22.500 0v4" stroke="#0f6a93" stroke-width="2.200"/></svg></div>
      <div class="tray">
        <svg width="16" height="20" viewBox="0 0 16 20" fill="none" stroke="#fff" stroke-width="1.800"><path d="m1.500 13.500 6.500-6.500 6.500 6.500"/></svg>
        <svg class="cloud" width="22" height="20" viewBox="0 0 22 20"><path d="M5 15.500a4.500 4.500 0 0 1 0-9 6.500 6.500 0 0 1 12-1 4 4 0 0 1 1.500 8L14 15.500z" fill="#9b9b9b"/><path d="M5 15.500a4.500 4.500 0 0 1 .5-9c3 0 4 2 7 3.500L10 15.500z" fill="#dcdcdc"/><circle cx="16" cy="14" r="5.800" fill="#777"/><path d="M14.700 11v6M17.300 11v6" stroke="#fff" stroke-width="1.200"/></svg>
        <div class="lang"><div>ENG</div><div>US</div></div>
        <svg width="20" height="20" viewBox="0 0 20 20" fill="none" stroke-width="1.700" stroke-linecap="round"><path d="M1 7.500a13 13 0 0 1 18 0" stroke="#666"/><path d="M3.500 10.300a9.300 9.300 0 0 1 13 0M6.300 13a5.300 5.300 0 0 1 7.400 0" stroke="#fff"/><circle cx="10" cy="15.500" r="1.600" fill="#fff"/></svg>
        <svg class="vol" width="21" height="20" viewBox="0 0 21 20" fill="none" stroke-width="1.600" stroke-linecap="round"><path d="M1 7.500h3l5-4.500v14L4 12.500H1z" stroke="#fff" stroke-linejoin="round"/><path d="M12 7.500a4 4 0 0 1 0 5" stroke="#fff"/><path d="M14.500 5a7.500 7.500 0 0 1 0 10M17 2.500a11 11 0 0 1 0 15" stroke="#777"/></svg>
        <svg class="bat" width="21" height="20" viewBox="0 0 21 20"><rect x="2" y="4.800" width="16" height="11.500" rx="3" fill="none" stroke="#fff" stroke-width="1.600"/><rect x="4.500" y="7" width="11" height="7" rx="1" fill="#fff"/><rect x="19" y="8" width="1.800" height="5" rx=".9" fill="#fff"/><path d="M3.500 0 0 7h2.500L1.500 12 7 5H4z" fill="#fff" stroke="#1c1c1c" stroke-width=".8"/></svg>
        <div class="time"><div>20:21</div><div>01/10/2025</div></div>
      </div>`;
  }
}

@customElement("app-root")
class AppRoot extends LitElement {
  static styles = [shared, css`
    :host { display: block; width: 1920px; height: 1080px; overflow: hidden; background: #1c1c1c; }
    .view { display: flex; height: 911px; }
    .site { width: 1901px; display: flex; flex-direction: column; }
    .body { display: flex; flex: 1; }
    .main { flex: 1; display: flex; flex-direction: column; }
    .scroll { width: 19px; background: #2c2c2c; display: flex; flex-direction: column; align-items: center; padding: 6px 0 4px; position: relative; z-index: 4; }
    .thumb { width: 11px; height: 789px; margin: 7px 0 auto; border-radius: 6px; background: #9f9f9f; }
  `];
  render() {
    return html`
      <browser-chrome></browser-chrome>
      <div class="view">
        <div class="site">
          <site-header></site-header>
          <div class="body">
            <side-menu></side-menu>
            <div class="main"><history-page></history-page><bottom-nav></bottom-nav></div>
          </div>
        </div>
        <div class="scroll">
          <svg width="13" height="10" viewBox="0 0 13 10" fill="#9f9f9f"><path d="M6.500.5 12.500 9.500H.5z" stroke="#9f9f9f" stroke-linejoin="round"/></svg>
          <div class="thumb"></div>
          <svg width="13" height="10" viewBox="0 0 13 10" fill="#9f9f9f"><path d="M6.500 9.500 12.500.5H.5z" stroke="#9f9f9f" stroke-linejoin="round"/></svg>
        </div>
      </div>
      <task-bar></task-bar>`;
  }
}
